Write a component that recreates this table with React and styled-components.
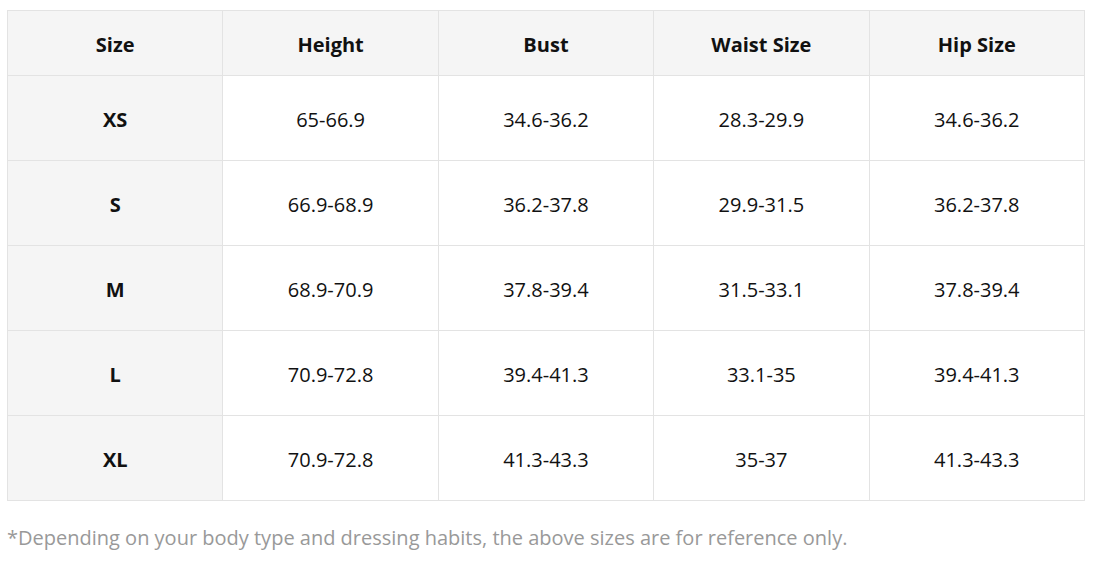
import React from 'react'
import styled, { createGlobalStyle } from 'styled-components'

const Global = createGlobalStyle`
  body {
    margin: 0;
    background: #fff;
    font-family: "Open Sans", "Noto Sans", "Liberation Sans", sans-serif;
  }
`

const Page = styled.div`
  padding: 10px 9px 0 7px;
`

const Table = styled.table`
  width: 100%;
  border-collapse: collapse;
  table-layout: fixed;
  border: 1px solid #e3e3e3;
`

const Th = styled.th`
  height: 62px;
  background: #f5f5f5;
  border: 1px solid #e3e3e3;
  font-size: 20px;
  font-weight: 700;
  color: #111;
  text-align: center;
  padding: 2px 0 0;
`

const Td = styled.td`
  height: 82px;
  border: 1px solid #e3e3e3;
  background: ${props => (props.head ? '#f5f5f5' : '#fff')};
  font-size: 20px;
  font-weight: ${props => (props.head ? 700 : 400)};
  color: #111;
  text-align: center;
  padding: 2px 0 0;
`

const Note = styled.p`
  margin: 23px 0 0;
  font-size: 20px;
  color: #999;
`

const headers = ['Size', 'Height', 'Bust', 'Waist Size', 'Hip Size']

const rows = [
  ['XS', '65-66.9', '34.6-36.2', '28.3-29.9', '34.6-36.2'],
  ['S', '66.9-68.9', '36.2-37.8', '29.9-31.5', '36.2-37.8'],
  ['M', '68.9-70.9', '37.8-39.4', '31.5-33.1', '37.8-39.4'],
  ['L', '70.9-72.8', '39.4-41.3', '33.1-35', '39.4-41.3'],
  ['XL', '70.9-72.8', '41.3-43.3', '35-37', '41.3-43.3'],
]

export default function App() {
  return (
    <Page>
      <Global />
      <Table>
        <thead>
          <tr>
            {headers.map(h => (
              <Th key={h}>{h}</Th>
            ))}
          </tr>
        </thead>
        <tbody>
          {rows.map(r => (
            <tr key={r[0]}>
              {r.map((c, i) => (
                <Td key={i} head={i === 0}>
                  {c}
                </Td>
              ))}
            </tr>
          ))}
        </tbody>
      </Table>
      <Note>
        *Depending on your body type and dressing habits, the above sizes are
        for reference only.
      </Note>
    </Page>
  )
}
